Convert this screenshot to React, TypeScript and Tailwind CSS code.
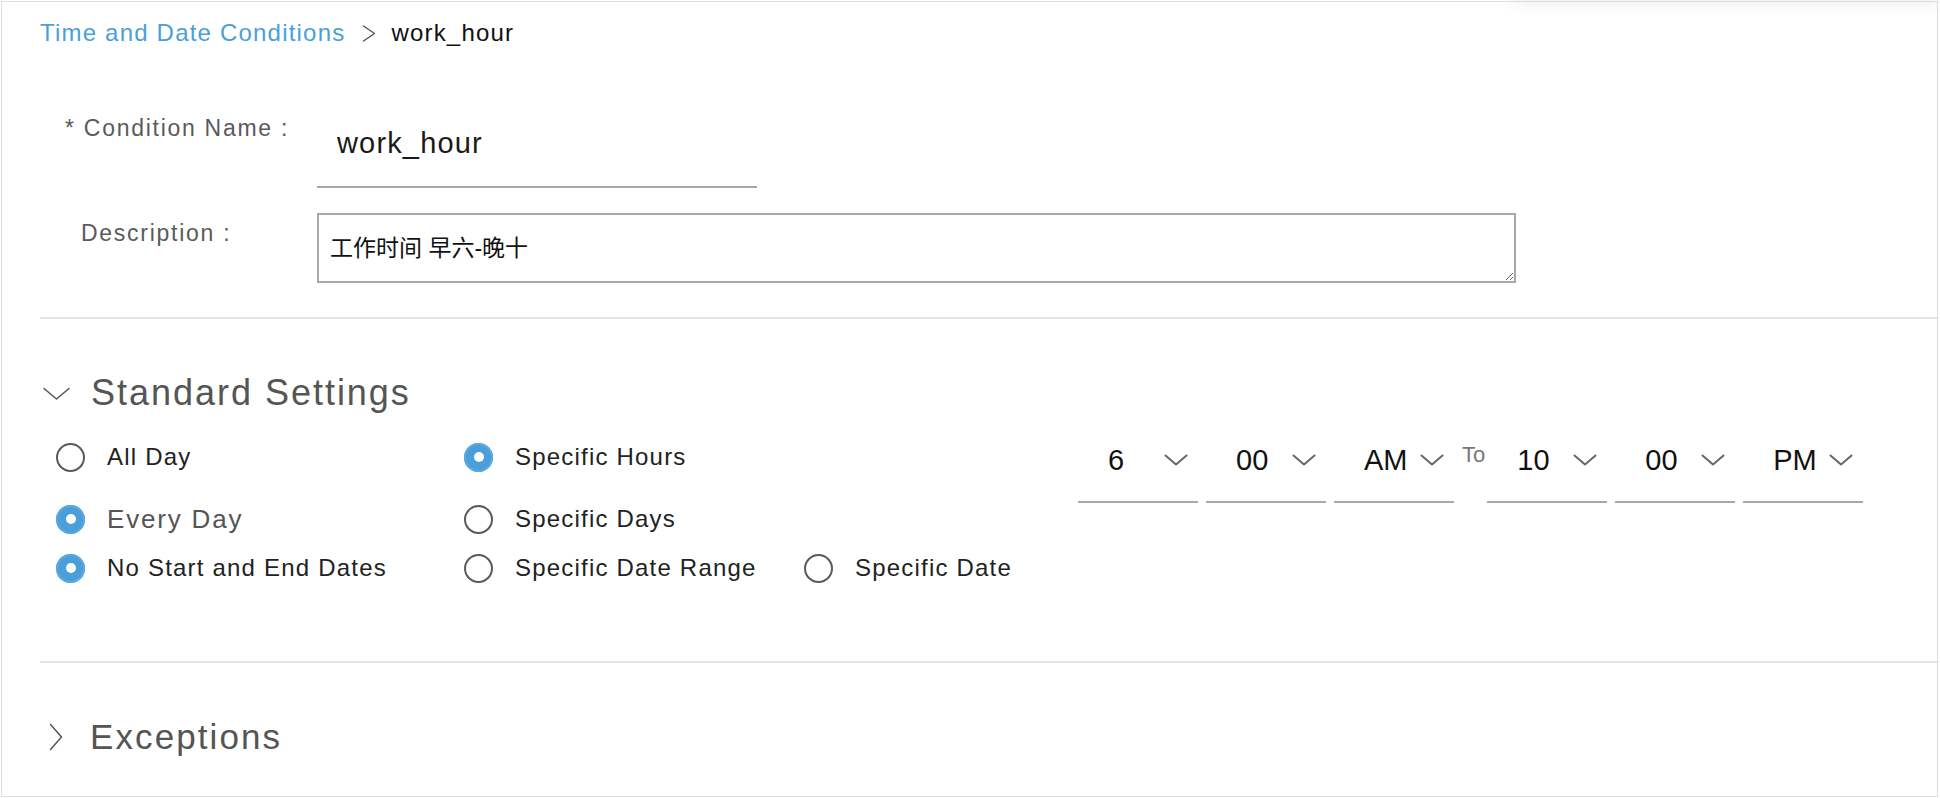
import { useState } from 'react';

const Chevron = ({ className, points, w, h, stroke = '#555', sw = 1.5 }: { className?: string; points: string; w: number; h: number; stroke?: string; sw?: number }) => (
  <svg width={w} height={h} viewBox={`0 0 ${w} ${h}`} className={className} fill="none">
    <polyline points={points} stroke={stroke} strokeWidth={sw} strokeLinecap="round" strokeLinejoin="round" />
  </svg>
);

const Radio = ({ checked, label, labelClass }: { checked?: boolean; label: string; labelClass?: string }) => (
  <div className="flex items-center gap-[22px] h-[40px]">
    {checked ? (
      <span className="w-[29px] h-[29px] rounded-full bg-[#4a9fd9] flex items-center justify-center shrink-0 shadow-[inset_0_0_0_2px_#5aa9df]">
        <span className="w-[10px] h-[10px] rounded-full bg-white" />
      </span>
    ) : (
      <span className="w-[29px] h-[29px] rounded-full border-2 border-[#5a5a5a] bg-white shrink-0" />
    )}
    <span className={labelClass ?? 'text-[24px] tracking-[0.05em] text-[#222] leading-[30px] whitespace-nowrap'}>{label}</span>
  </div>
);

const TimeSelect = ({ value }: { value: string }) => (
  <div className="w-[120px] h-[66px] border-b-2 border-[#a8a8a8] pt-[4px] shrink-0">
    <div className="flex items-center h-[38px] pl-[30px] pr-[10px]">
      <span className="text-[29px] leading-[38px] text-[#111]">{value}</span>
      <Chevron className="ml-auto" w={24} h={12} points="1.5,1.5 12,10.5 22.5,1.5" stroke="#666" sw={2} />
    </div>
  </div>
);

export default function App() {
  const [name, setName] = useState('work_hour');
  const [desc, setDesc] = useState('工作时间 早六-晚十');

  return (
    <div className="relative w-[1940px] h-[798px] bg-white overflow-hidden font-['Liberation_Sans','Noto_Sans_CJK_SC',sans-serif]">
      {/* shadow spilling in from a menu above the view */}
      <div className="absolute left-[1515px] right-0 top-[-30px] h-[30px] bg-white shadow-[0_4px_16px_rgba(0,0,0,0.07)]" />

      <div className="relative ml-[1px] mt-[1px] w-[1937px] h-[796px] border border-[#dedede] pl-[38px] pt-[19px]">
        {/* Breadcrumb */}
        <div className="flex items-center h-[24px] text-[24px] tracking-[0.05em] leading-[24px]">
          <span className="text-[#4a9fd9]">Time and Date Conditions</span>
          <Chevron className="ml-[17px] mr-[15px]" w={14} h={17} points="1.5,1 12.5,8.5 1.5,16" stroke="#555" sw={1.4} />
          <span className="text-[#111]">work_hour</span>
        </div>

        {/* Condition Name */}
        <div className="flex mt-[71px]">
          <div className="w-[277px] pl-[25px] shrink-0">
            <div className="h-[25px] leading-[25px] text-[23px] tracking-[0.075em] text-[#5a5a5a] whitespace-nowrap">* Condition Name :</div>
          </div>
          <input
            value={name}
            onChange={(e) => setName(e.target.value)}
            className="w-[440px] h-[72px] border-b-2 border-[#a6a6a6] pb-[15px] pl-[20px] text-[29px] tracking-[0.04em] text-[#1a1a1a] bg-transparent outline-none"
          />
        </div>

        {/* Description */}
        <div className="flex mt-[25px]">
          <div className="w-[277px] pl-[41px] pt-[8px] shrink-0">
            <div className="h-[25px] leading-[25px] text-[23px] tracking-[0.075em] text-[#5a5a5a] whitespace-nowrap">Description :</div>
          </div>
          <textarea
            value={desc}
            onChange={(e) => setDesc(e.target.value)}
            className="block w-[1199px] h-[70px] border-2 border-[#a8a8a8] pl-[11px] pt-[18px] text-[23px] leading-[30px] text-[#111] outline-none"
          />
        </div>

        <div className="mt-[34px] border-t-2 border-[#e2e2e2]" />

        {/* Standard Settings */}
        <div className="flex items-center h-[40px] mt-[54px]">
          <Chevron className="ml-[3px] mr-[21px]" w={27} h={13} points="1,1.5 13.5,12 26,1.5" stroke="#555" sw={1.5} />
          <span className="text-[36px] tracking-[0.055em] leading-[40px] text-[#555]">Standard Settings</span>
        </div>

        <div className="flex mt-[24px]">
          <div className="w-[1038px] pl-[16px] shrink-0">
            <div className="grid grid-cols-[408px_340px_1fr]">
              <Radio label="All Day" />
              <Radio checked label="Specific Hours" />
              <div />
            </div>
            <div className="grid grid-cols-[408px_340px_1fr] mt-[22px]">
              <Radio
                checked
                label="Every Day"
                labelClass="text-[26px] tracking-[0.07em] text-[#555] leading-[30px] whitespace-nowrap"
              />
              <Radio label="Specific Days" />
              <div />
            </div>
            <div className="grid grid-cols-[408px_340px_1fr] mt-[9px]">
              <Radio checked label="No Start and End Dates" />
              <Radio label="Specific Date Range" />
              <Radio label="Specific Date" />
            </div>
          </div>

          <div className="flex items-start gap-[8px]">
            <TimeSelect value="6" />
            <TimeSelect value="00" />
            <TimeSelect value="AM" />
            <span className="mt-[6px] mr-[-6px] text-[22px] leading-[24px] text-[#777]">To</span>
            <TimeSelect value="10" />
            <TimeSelect value="00" />
            <TimeSelect value="PM" />
          </div>
        </div>

        <div className="mt-[73px] border-t-2 border-[#e2e2e2]" />

        {/* Exceptions */}
        <div className="flex items-center h-[40px] mt-[54px]">
          <Chevron className="ml-[9px] mr-[27px]" w={14} h={28} points="1.5,1.5 12.5,14 1.5,26.5" stroke="#555" sw={1.5} />
          <span className="text-[35px] tracking-[0.06em] leading-[40px] text-[#555]">Exceptions</span>
        </div>
      </div>
    </div>
  );
}
